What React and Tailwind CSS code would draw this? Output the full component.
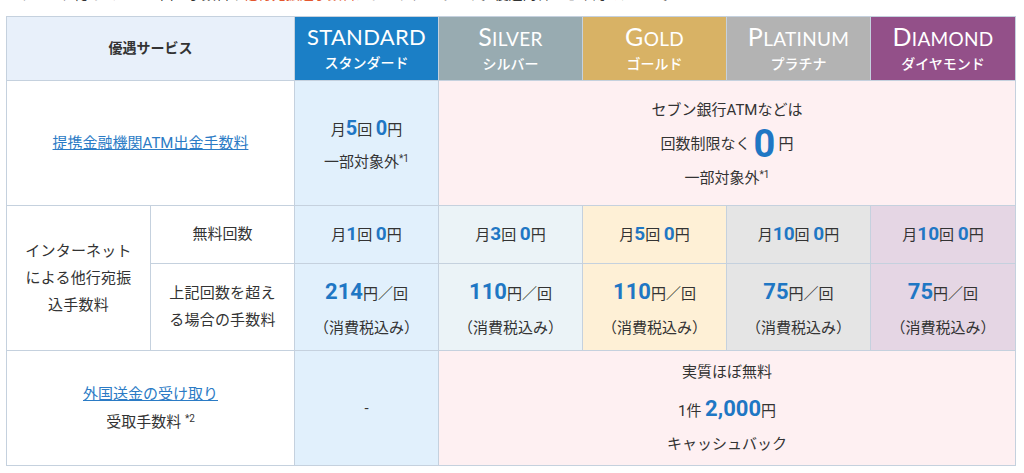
import React from 'react';

const tiers = [
  { key: 'standard', head: 'S', rest: 'TANDARD', full: true, kana: 'スタンダード', bg: 'bg-[#1b7fc6]' },
  { key: 'silver', head: 'S', rest: 'ILVER', kana: 'シルバー', bg: 'bg-[#98abb1]' },
  { key: 'gold', head: 'G', rest: 'OLD', kana: 'ゴールド', bg: 'bg-[#d8b265]' },
  { key: 'platinum', head: 'P', rest: 'LATINUM', kana: 'プラチナ', bg: 'bg-[#b3b3b3]' },
  { key: 'diamond', head: 'D', rest: 'IAMOND', kana: 'ダイヤモンド', bg: 'bg-[#935089]' },
];

const rates = [
  { count: '3', fee: '110', bg: 'bg-[#ebf3f7]' },
  { count: '5', fee: '110', bg: 'bg-[#fef0d6]' },
  { count: '10', fee: '75', bg: 'bg-[#e5e5e5]' },
  { count: '10', fee: '75', bg: 'bg-[#e5d6e4]' },
];

const cell = 'border border-[#c5d1de] text-center align-middle';
const num = 'text-[#1f77c4] font-bold';

function Free({ count }) {
  return (
    <span className="text-[15px]">
      月<span className={`${num} text-[19px]`}>{count}</span>回 <span className={`${num} text-[19px]`}>0</span>円
    </span>
  );
}

function Fee({ fee }) {
  return (
    <div className="flex flex-col items-center gap-[9px]">
      <span className="text-[15px]">
        <span className={`${num} text-[22px]`}>{fee}</span>円／回
      </span>
      <span className="text-[15px]">（消費税込み）</span>
    </div>
  );
}

export default function App() {
  return (
    <div className="w-[1024px] h-[473px] bg-white overflow-hidden text-[#333] font-['Roboto','Noto_Sans_CJK_JP',sans-serif]">
      {/* cut-off line above the table */}
      <div className="h-4 overflow-hidden pl-[6px]">
        <p className="-mt-[16px] text-[14px] leading-5 whitespace-nowrap">
          ステージに応じて、ATM出金手数料や<span className="text-[#e4572e]">他行宛振込手数料</span>がおトクになります。優遇内容をご確認ください。
        </p>
      </div>

      <table className="ml-[6px] w-[1009px] table-fixed border-collapse border border-[#aebdd0]">
        <colgroup>
          <col className="w-[144px]" />
          <col className="w-[144px]" />
          <col className="w-[144px]" />
          <col className="w-[144px]" />
          <col className="w-[144px]" />
          <col className="w-[144px]" />
          <col className="w-[145px]" />
        </colgroup>
        <tbody>
          <tr className="h-[64px]">
            <td colSpan={2} className={`${cell} bg-[#e8f0fa] text-[14px] font-bold`}>優遇サービス</td>
            {tiers.map((t) => (
              <td key={t.key} className={`${cell} ${t.bg} text-white`}>
                <div className="flex flex-col items-center pt-[2px]">
                  <span className="font-['Lato',sans-serif] leading-[22px] tracking-[0.3px]">
                    <span className={t.full ? 'text-[22px]' : 'text-[25px]'}>{t.head}</span>
                    <span className={t.full ? 'text-[22px]' : 'text-[19px]'}>{t.rest}</span>
                  </span>
                  <span className="text-[14px] font-medium leading-5 mt-[3px]">{t.kana}</span>
                </div>
              </td>
            ))}
          </tr>

          <tr className="h-[125px]">
            <td colSpan={2} className={cell}>
              <a href="#" className="text-[15px] text-[#2b7bc5] underline">提携金融機関ATM出金手数料</a>
            </td>
            <td className={`${cell} bg-[#e1f0fc]`}>
              <div className="flex flex-col items-center gap-[8px]">
                <span className="text-[15px]">
                  月<span className={`${num} text-[20px]`}>5</span>回 <span className={`${num} text-[20px]`}>0</span>円
                </span>
                <span className="text-[15px]">一部対象外<sup className="text-[10px]">*1</sup></span>
              </div>
            </td>
            <td colSpan={4} className={`${cell} bg-[#fef0f2]`}>
              <div className="flex flex-col items-center gap-[6px] pt-[2px]">
                <span className="text-[15px]">セブン銀行ATMなどは</span>
                <span className="text-[15px] flex items-center leading-[34px]">
                  回数制限なく<span className={`${num} text-[38px] mx-[3px]`}>0</span>円
                </span>
                <span className="text-[15px]">一部対象外<sup className="text-[10px]">*1</sup></span>
              </div>
            </td>
          </tr>

          <tr className="h-[58px]">
            <td rowSpan={2} className={`${cell} text-[15px] leading-[27px] tracking-[0.2px]`}>
              インターネット<br />による他行宛振<br />込手数料
            </td>
            <td className={`${cell} text-[15px]`}>無料回数</td>
            <td className={`${cell} bg-[#e1f0fc]`}><Free count="1" /></td>
            {rates.map((r, i) => (
              <td key={i} className={`${cell} ${r.bg}`}><Free count={r.count} /></td>
            ))}
          </tr>

          <tr className="h-[87px]">
            <td className={`${cell} text-[15px] leading-[27px] tracking-[0.2px]`}>
              上記回数を超え<br />る場合の手数料
            </td>
            <td className={`${cell} bg-[#e1f0fc]`}><Fee fee="214" /></td>
            {rates.map((r, i) => (
              <td key={i} className={`${cell} ${r.bg}`}><Fee fee={r.fee} /></td>
            ))}
          </tr>

          <tr className="h-[115px]">
            <td colSpan={2} className={cell}>
              <div className="flex flex-col items-center gap-[5px]">
                <a href="#" className="text-[15px] text-[#2b7bc5] underline">外国送金の受け取り</a>
                <span className="text-[15px]">受取手数料 <sup className="text-[10px]">*2</sup></span>
              </div>
            </td>
            <td className={`${cell} bg-[#e1f0fc] text-[15px]`}>-</td>
            <td colSpan={4} className={`${cell} bg-[#fef0f2]`}>
              <div className="flex flex-col items-center gap-[8px]">
                <span className="text-[15px]">実質ほぼ無料</span>
                <span className="text-[15px]">
                  1件 <span className={`${num} text-[22px]`}>2,000</span>円
                </span>
                <span className="text-[15px]">キャッシュバック</span>
              </div>
            </td>
          </tr>
        </tbody>
      </table>
    </div>
  );
}
